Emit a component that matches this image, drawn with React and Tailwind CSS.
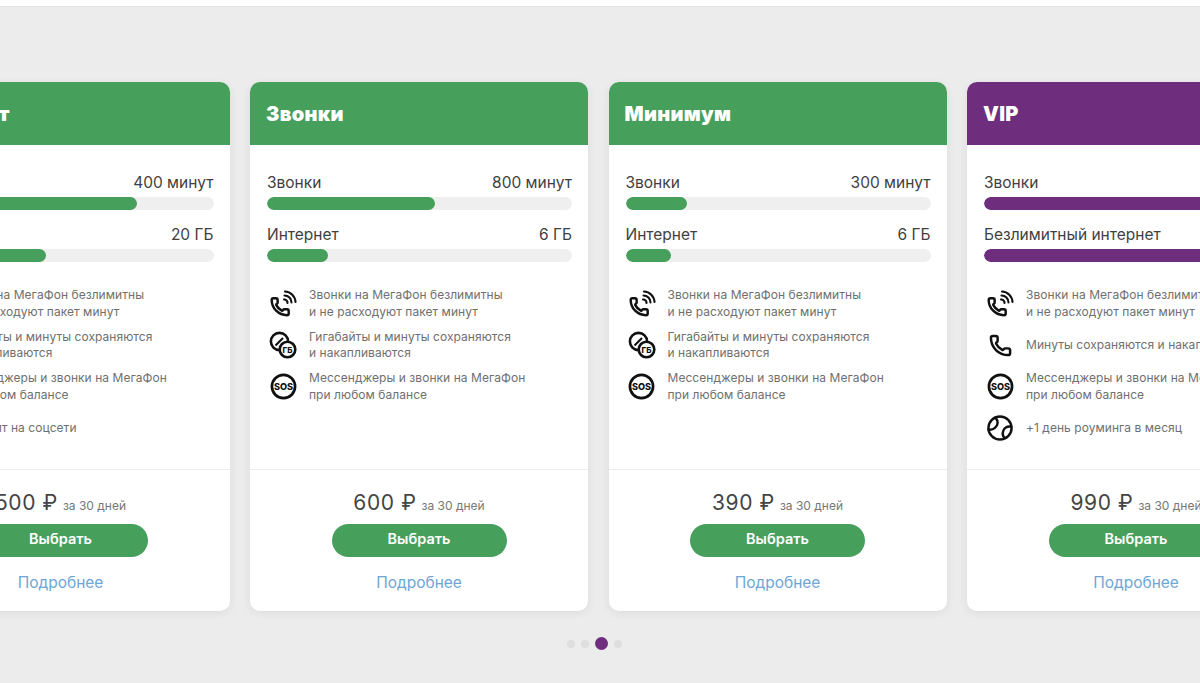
import React from 'react'

const green = 'bg-[#479f5c]'
const purple = 'bg-[#6e2d7d]'

const handset = 'M13.83 16.57a1 1 0 0 0 1.21-.3l.36-.47a2 2 0 0 1 1.6-.8h3a2 2 0 0 1 2 2v3a2 2 0 0 1-2 2A18 18 0 0 1 2 4a2 2 0 0 1 2-2h3a2 2 0 0 1 2 2v3a2 2 0 0 1-.8 1.6l-.47.35a1 1 0 0 0-.29 1.23 14 14 0 0 0 6.39 6.39'

const CallsIcon = () => (
    <svg viewBox="0 0 28 28" className="w-[28px] h-[28px]" fill="none" stroke="#111" strokeWidth="2.1" strokeLinecap="round" strokeLinejoin="round">
        <path d="M16 1.500a11 11 0 0 1 10.500 10.500" />
        <path d="M15.500 5.500a7 7 0 0 1 7 7" />
        <path d="M15 9.500a3.200 3.200 0 0 1 3.500 3.500" />
        <g transform="translate(1 6.500) scale(0.85)" strokeWidth="2.9">
            <path d={handset} />
        </g>
    </svg>
)

const PhoneIcon = () => (
    <svg viewBox="0 0 24 24" className="w-[23px] h-[23px]" fill="none" stroke="#111" strokeWidth="2.6" strokeLinecap="round" strokeLinejoin="round">
        <path d={handset} />
    </svg>
)

const RolloverIcon = () => (
    <svg viewBox="0 0 28 28" className="w-[28px] h-[28px]" fill="none" stroke="#111" strokeWidth="2.6">
        <circle cx="10.500" cy="10.500" r="8.600" />
        <path d="M6.500 14.500l7.500-7.500" strokeWidth="2.200" />
        <circle cx="18.500" cy="18.500" r="7.800" fill="#fff" />
        <text x="18.500" y="21.500" textAnchor="middle" fontSize="8" fontWeight="800" fill="#111" stroke="none" fontFamily="Inter, sans-serif">ГБ</text>
    </svg>
)

const SosIcon = () => (
    <svg viewBox="0 0 28 28" className="w-[27px] h-[27px]" fill="none" stroke="#111" strokeWidth="2.8">
        <circle cx="14" cy="14" r="12" />
        <text x="14" y="17.300" textAnchor="middle" fontSize="9.500" fontWeight="800" fill="#111" stroke="none" fontFamily="Inter, sans-serif">SOS</text>
    </svg>
)

const BallIcon = () => (
    <svg viewBox="0 0 30 30" className="w-[28px] h-[28px]" fill="none" stroke="#111" strokeWidth="2.6" strokeLinecap="round">
        <circle cx="15" cy="15" r="12.400" />
        <path d="M10 3.600c3.400 4 3.200 8.200-.4 11.200-2 1.700-4.600 2.300-7 1.800" />
        <path d="M27.200 13.600c-4-.6-7.200 1-8.600 4.200-1 2.500-.6 5.800 1.200 8" />
    </svg>
)

const Bar = ({ label, value, pct, color }) => (
    <div className="flex flex-col">
        <div className="flex justify-between items-center h-[22px] text-[15.5px] text-[#3f3f3f]">
            <span>{label}</span>
            <span>{value}</span>
        </div>
        <div className="mt-[3px] h-[13px] rounded-full bg-[#efefef] overflow-hidden">
            <div className={`h-full rounded-full ${color}`} style={{ width: `${pct}%` }} />
        </div>
    </div>
)

const callsFeature = { icon: <CallsIcon />, lines: ['Звонки на МегаФон безлимитны', 'и не расходуют пакет минут'] }
const rollFeature = { icon: <RolloverIcon />, lines: ['Гигабайты и минуты сохраняются', 'и накапливаются'] }
const sosFeature = { icon: <SosIcon />, lines: ['Мессенджеры и звонки на МегаФон', 'при любом балансе'] }

const plans = [
    {
        name: 'Интернет', color: green, price: '500', minutes: '400 минут', callsPct: 75, netLabel: 'Интернет', netValue: '20 ГБ', netPct: 45,
        features: [callsFeature, rollFeature, sosFeature, { icon: null, lines: ['Безлимит на соцсети'] }],
    },
    {
        name: 'Звонки', color: green, price: '600', minutes: '800 минут', callsPct: 55, netLabel: 'Интернет', netValue: '6 ГБ', netPct: 20,
        features: [callsFeature, rollFeature, sosFeature],
    },
    {
        name: 'Минимум', color: green, price: '390', minutes: '300 минут', callsPct: 20, netLabel: 'Интернет', netValue: '6 ГБ', netPct: 15,
        features: [callsFeature, rollFeature, sosFeature],
    },
    {
        name: 'VIP', color: purple, price: '990', minutes: '1500 минут', callsPct: 100, netLabel: 'Безлимитный интернет', netValue: '', netPct: 100,
        features: [
            callsFeature,
            { icon: <PhoneIcon />, lines: ['Минуты сохраняются и накапливаются'] },
            sosFeature,
            { icon: <BallIcon />, lines: ['+1 день роуминга в месяц'] },
        ],
    },
]

const Card = ({ plan }) => (
    <div className="w-[338px] h-[529px] shrink-0 flex flex-col bg-white rounded-[10px] overflow-hidden shadow-[0_2px_10px_rgba(0,0,0,0.07)]">
        <div className={`h-[63px] shrink-0 flex items-center pl-[16px] text-white text-[20px] font-black tracking-[0.3px] ${plan.color}`}>
            {plan.name}
        </div>
        <div className="h-[324px] shrink-0 pt-[27px] pl-[17px] pr-[16px] flex flex-col">
            <div className="flex flex-col gap-[14px]">
                <Bar label="Звонки" value={plan.minutes} pct={plan.callsPct} color={plan.color} />
                <Bar label={plan.netLabel} value={plan.netValue} pct={plan.netPct} color={plan.color} />
            </div>
            <div className="mt-[25px] flex flex-col gap-[8.5px]">
                {plan.features.map((f, i) => (
                    <div key={i} className="h-[33px] flex items-center">
                        <div className="w-[30px] ml-[1px] mr-[11px] flex justify-center shrink-0">{f.icon}</div>
                        <div className="text-[12px] leading-[16.5px] tracking-[0.05px] text-[#6f6f6f] whitespace-nowrap">
                            {f.lines.map(line => <div key={line}>{line}</div>)}
                        </div>
                    </div>
                ))}
            </div>
        </div>
        <div className="flex-1 border-t border-[#ececec] flex flex-col items-center pt-[17px]">
            <div className="h-[28px] flex items-baseline gap-[5px] text-[#444]">
                <span className="text-[21px] tracking-[0.6px]">{plan.price} ₽</span>
                <span className="text-[12px] text-[#777]">за 30 дней</span>
            </div>
            <button className={`mt-[9px] w-[175px] h-[33px] pb-[3px] rounded-full text-white text-[14.5px] font-semibold ${green}`}>Выбрать</button>
            <a className="mt-[14px] text-[15.5px] text-[#6ea6d6]">Подробнее</a>
        </div>
    </div>
)

export default function App() {
    return (
        <div className="w-[1200px] h-[683px] overflow-hidden bg-[#ececed] font-['Inter',sans-serif]">
            <div className="h-[7px] bg-white border-b border-[#e4e4e4]" />
            <div className="mt-[75px] -ml-[108.5px] flex gap-[20.5px] w-max">
                {plans.map(p => <Card key={p.name} plan={p} />)}
            </div>
            <div className="mt-[26px] flex items-center justify-center gap-[6px] pr-[11px]">
                <span className="w-[8px] h-[8px] rounded-full bg-[#dedede]" />
                <span className="w-[8px] h-[8px] rounded-full bg-[#dedede]" />
                <span className="w-[13px] h-[13px] rounded-full bg-[#6e2d7d]" />
                <span className="w-[8px] h-[8px] rounded-full bg-[#dedede]" />
            </div>
        </div>
    )
}
